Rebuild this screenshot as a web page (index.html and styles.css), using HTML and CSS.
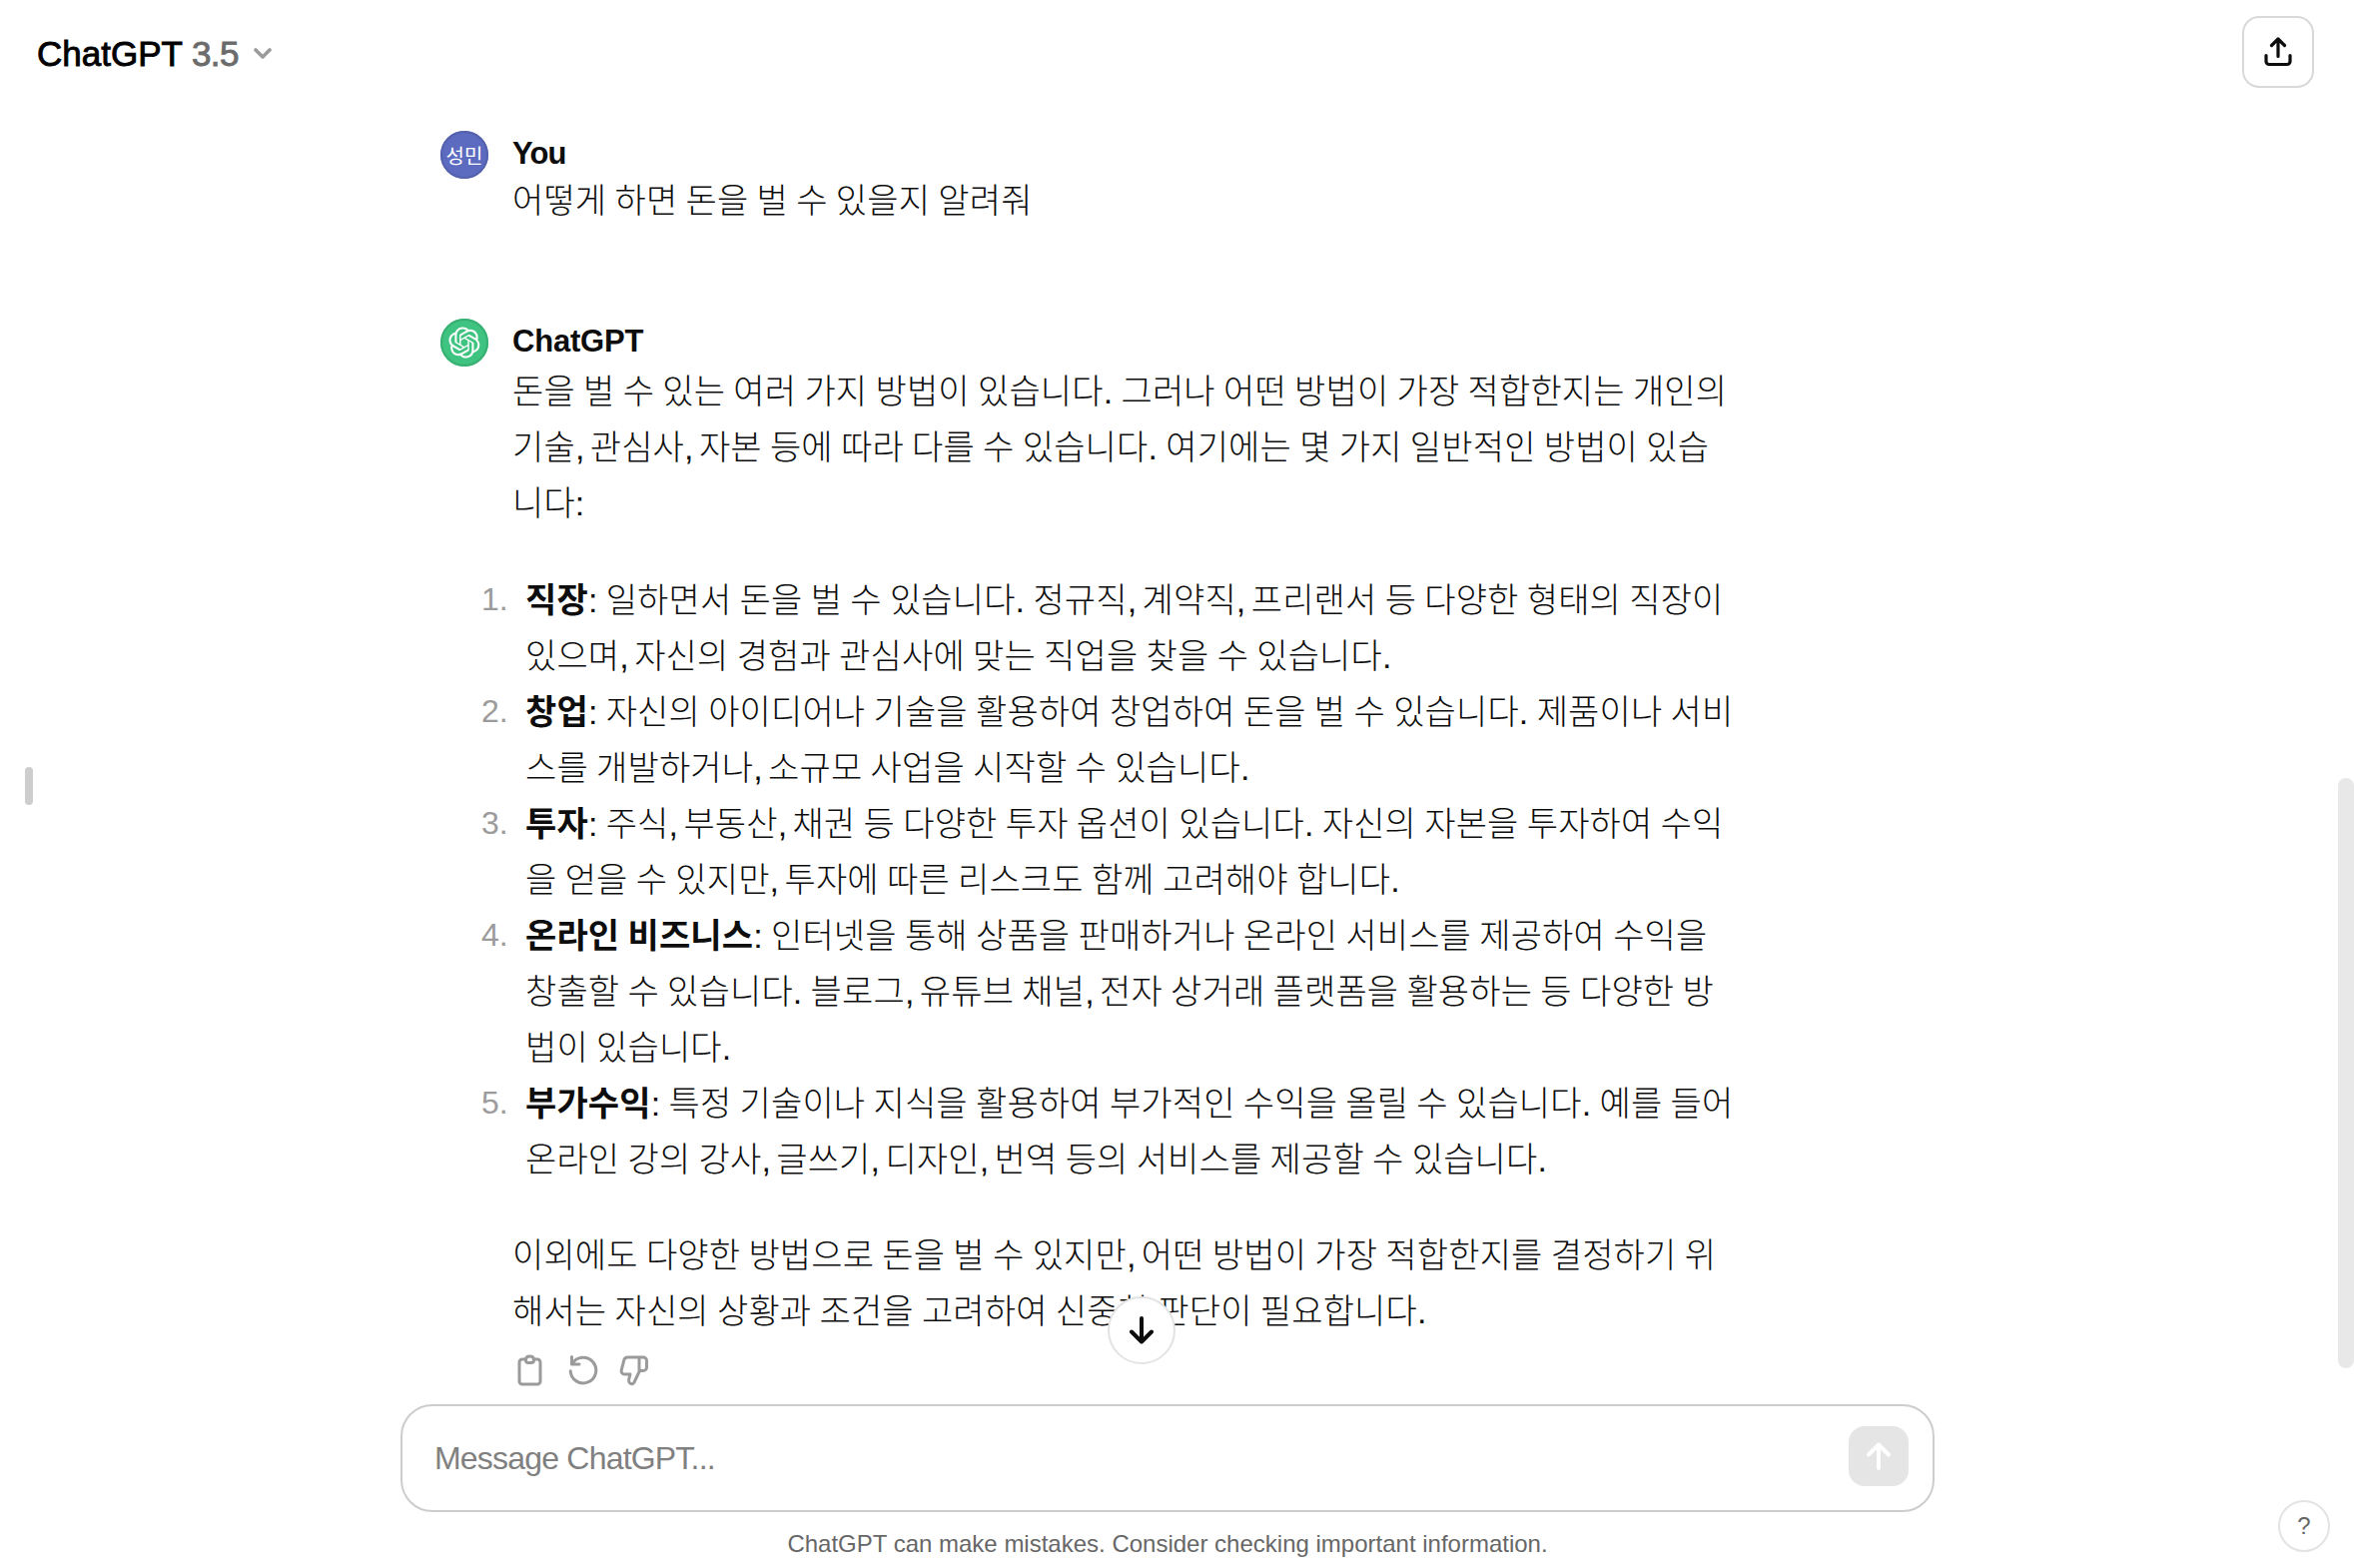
FILE: index.html
```html
<!DOCTYPE html>
<html lang="ko">
<head>
<meta charset="utf-8">
<title>ChatGPT</title>
<link rel="stylesheet" href="styles.css">
</head>
<body>
<div class="app">
  <aside class="rail"><span class="rail-handle"></span></aside>
  <header class="topbar">
    <div class="model">
      <span class="model-name">ChatGPT</span><span class="model-version">3.5</span>
      <svg class="chevron" viewBox="0 0 18 11"><path d="M2 2l7 7 7-7"/></svg>
    </div>
    <button class="share" aria-label="Share">
      <svg class="share-icon" viewBox="0 0 28 30"><path d="M14 19.500V2.500M7.500 8.500L14 2l6.500 6.500M2 18.500v6a3 3 0 0 0 3 3h18a3 3 0 0 0 3-3v-6"/></svg>
    </button>
  </header>

  <main class="thread">
    <article class="turn turn-user">
      <div class="avatar avatar-user">성민</div>
      <div class="body">
        <h2 class="author author-you">You</h2>
        <p class="prompt">어떻게 하면 돈을 벌 수 있을지 알려줘</p>
      </div>
    </article>

    <article class="turn turn-bot">
      <div class="avatar avatar-bot">
        <svg class="logo" viewBox="0 0 41 41"><path d="M37.5324 16.8707C37.9808 15.5241 38.1363 14.0974 37.9886 12.6859C37.8409 11.2744 37.3934 9.91076 36.676 8.68622C35.6126 6.83404 33.9882 5.3676 32.0373 4.4985C30.0864 3.62941 27.9098 3.40259 25.8215 3.85078C24.8796 2.7893 23.7219 1.94125 22.4257 1.36341C21.1295 0.785575 19.7249 0.491269 18.3058 0.500197C16.1708 0.495044 14.0893 1.16803 12.3614 2.42214C10.6335 3.67624 9.34853 5.44666 8.6917 7.47815C7.30085 7.76286 5.98686 8.3414 4.8377 9.17505C3.68854 10.0087 2.73073 11.0782 2.02839 12.312C0.956464 14.1591 0.498905 16.2988 0.721698 18.4228C0.944492 20.5467 1.83612 22.5449 3.268 24.1293C2.81966 25.4759 2.66413 26.9026 2.81182 28.3141C2.95951 29.7256 3.40701 31.0892 4.12437 32.3138C5.18791 34.1659 6.8123 35.6322 8.76321 36.5013C10.7141 37.3704 12.8907 37.5973 14.9789 37.1492C15.9208 38.2107 17.0786 39.0587 18.3747 39.6366C19.6709 40.2144 21.0755 40.5087 22.4946 40.4998C24.6307 40.5054 26.7133 39.8321 28.4418 38.5772C30.1704 37.3223 31.4556 35.5506 32.1119 33.5179C33.5027 33.2332 34.8167 32.6547 35.9659 31.821C37.115 30.9874 38.0728 29.9178 38.7752 28.684C39.8458 26.8371 40.3023 24.6979 40.0789 22.5748C39.8556 20.4517 38.9639 18.4544 37.5324 16.8707ZM22.4978 37.8849C20.7443 37.8874 19.0459 37.2733 17.6994 36.1501C17.7601 36.117 17.8666 36.0586 17.936 36.0161L25.9004 31.4156C26.1003 31.3019 26.2663 31.137 26.3813 30.9378C26.4964 30.7386 26.5563 30.5124 26.5549 30.2825V19.0542L29.9213 20.998C29.9389 21.0068 29.9541 21.0198 29.9656 21.0359C29.977 21.052 29.9842 21.0707 29.9867 21.0902V30.3889C29.9842 32.375 29.1946 34.2791 27.7909 35.6841C26.3872 37.0892 24.4838 37.8806 22.4978 37.8849ZM6.39227 31.0064C5.51397 29.4888 5.19742 27.7107 5.49804 25.9832C5.55718 26.0187 5.66048 26.0818 5.73461 26.1244L13.699 30.7248C13.8975 30.8408 14.1233 30.902 14.3532 30.902C14.583 30.902 14.8088 30.8408 15.0073 30.7248L24.731 25.1103V28.9979C24.7321 29.0177 24.7283 29.0376 24.7199 29.0556C24.7115 29.0736 24.6988 29.0893 24.6829 29.1012L16.6317 33.7497C14.9096 34.7416 12.8643 35.0097 10.9447 34.4954C9.02506 33.9811 7.38785 32.7263 6.39227 31.0064ZM4.29707 13.6194C5.17156 12.0998 6.55279 10.9364 8.19885 10.3327C8.19885 10.4013 8.19491 10.5228 8.19491 10.6071V19.808C8.19351 20.0378 8.25334 20.2638 8.36823 20.4629C8.48312 20.6619 8.64893 20.8267 8.84863 20.9404L18.5723 26.5542L15.206 28.4979C15.1894 28.5089 15.1703 28.5155 15.1505 28.5173C15.1307 28.5191 15.1107 28.516 15.0924 28.5082L7.04046 23.8557C5.32135 22.8601 4.06716 21.2235 3.55289 19.3046C3.03862 17.3858 3.30624 15.3413 4.29707 13.6194ZM31.955 20.0556L22.2312 14.4411L25.5976 12.4981C25.6142 12.4872 25.6333 12.4805 25.6531 12.4787C25.6729 12.4769 25.6928 12.4801 25.7111 12.4879L33.7631 17.1364C34.9967 17.849 36.0017 18.8982 36.6606 20.1613C37.3194 21.4244 37.6047 22.849 37.4832 24.2684C37.3617 25.6878 36.8382 27.0432 35.9743 28.1759C35.1103 29.3086 33.9415 30.1717 32.6047 30.6641C32.6047 30.5947 32.6047 30.4733 32.6047 30.3889V21.188C32.6066 20.9586 32.5474 20.7328 32.4332 20.5338C32.319 20.3348 32.154 20.1698 31.955 20.0556ZM35.3055 15.0128C35.2464 14.9765 35.1431 14.9142 35.069 14.8717L27.1045 10.2712C26.906 10.1554 26.6803 10.0943 26.4504 10.0943C26.2206 10.0943 25.9948 10.1554 25.7963 10.2712L16.0726 15.8858V11.9982C16.0715 11.9783 16.0753 11.9585 16.0837 11.9405C16.0921 11.9225 16.1048 11.9068 16.1207 11.8949L24.1719 7.25025C25.4053 6.53903 26.8158 6.19376 28.2383 6.25482C29.6608 6.31589 31.0364 6.78077 32.2044 7.59508C33.3723 8.40939 34.2842 9.53945 34.8334 10.8531C35.3826 12.1667 35.5464 13.6095 35.3055 15.0128ZM14.2424 21.9419L10.8752 19.9981C10.8576 19.9893 10.8423 19.9763 10.8309 19.9602C10.8195 19.9441 10.8122 19.9254 10.8098 19.9058V10.6071C10.8107 9.18295 11.2173 7.78848 11.9819 6.58696C12.7466 5.38544 13.8377 4.42659 15.1275 3.82264C16.4173 3.21869 17.8524 2.99464 19.2649 3.1767C20.6775 3.35876 22.0089 3.93941 23.1034 4.85067C23.0427 4.88379 22.937 4.94215 22.8668 4.98473L14.9024 9.58517C14.7025 9.69878 14.5366 9.86356 14.4215 10.0626C14.3065 10.2616 14.2466 10.4877 14.2479 10.7175L14.2424 21.9419ZM16.071 17.9991L20.4018 15.4978L24.7325 17.9975V22.9985L20.4018 25.4983L16.071 22.9985V17.9991Z"/></svg>
      </div>
      <div class="body">
        <h2 class="author author-bot">ChatGPT</h2>
        <p class="para">돈을 벌 수 있는 여러 가지 방법이 있습니다. 그러나 어떤 방법이 가장 적합한지는 개인의<br>기술<i>,</i> 관심사<i>,</i> 자본 등에 따라 다를 수 있습니다. 여기에는 몇 가지 일반적인 방법이 있습<br>니다:</p>
        <ol class="ideas">
          <li class="idea"><span class="num">1.</span><p class="para"><b>직장</b>: 일하면서 돈을 벌 수 있습니다. 정규직<i>,</i> 계약직<i>,</i> 프리랜서 등 다양한 형태의 직장이<br>있으며<i>,</i> 자신의 경험과 관심사에 맞는 직업을 찾을 수 있습니다.</p></li>
          <li class="idea"><span class="num">2.</span><p class="para"><b>창업</b>: 자신의 아이디어나 기술을 활용하여 창업하여 돈을 벌 수 있습니다. 제품이나 서비<br>스를 개발하거나<i>,</i> 소규모 사업을 시작할 수 있습니다.</p></li>
          <li class="idea"><span class="num">3.</span><p class="para"><b>투자</b>: 주식<i>,</i> 부동산<i>,</i> 채권 등 다양한 투자 옵션이 있습니다. 자신의 자본을 투자하여 수익<br>을 얻을 수 있지만<i>,</i> 투자에 따른 리스크도 함께 고려해야 합니다.</p></li>
          <li class="idea"><span class="num">4.</span><p class="para"><b>온라인 비즈니스</b>: 인터넷을 통해 상품을 판매하거나 온라인 서비스를 제공하여 수익을<br>창출할 수 있습니다. 블로그<i>,</i> 유튜브 채널<i>,</i> 전자 상거래 플랫폼을 활용하는 등 다양한 방<br>법이 있습니다.</p></li>
          <li class="idea"><span class="num">5.</span><p class="para"><b>부가수익</b>: 특정 기술이나 지식을 활용하여 부가적인 수익을 올릴 수 있습니다. 예를 들어<br>온라인 강의 강사<i>,</i> 글쓰기<i>,</i> 디자인<i>,</i> 번역 등의 서비스를 제공할 수 있습니다.</p></li>
        </ol>
        <p class="para">이외에도 다양한 방법으로 돈을 벌 수 있지만<i>,</i> 어떤 방법이 가장 적합한지를 결정하기 위<br>해서는 자신의 상황과 조건을 고려하여 신중한 판단이 필요합니다.</p>
        <div class="actions">
          <svg class="action" viewBox="0 0 32 32"><path d="M10.500 5H7a3 3 0 0 0-3 3v19a3 3 0 0 0 3 3h15a3 3 0 0 0 3-3V8a3 3 0 0 0-3-3h-3.500M10.500 5.500C10.500 3.500 12 2 14.500 2s4 1.500 4 3.500v.5a2.500 2.500 0 0 1-2.500 2.500h-3a2.500 2.500 0 0 1-2.500-2.500z"/></svg>
          <svg class="action" viewBox="0 0 32 32"><path d="M4.500 2.500V10h7.500M5 9.500A12.800 12.800 0 1 1 3.200 16.800"/></svg>
          <svg class="action" viewBox="0 0 32 32"><path d="M20 3v13.500M8.500 3H24a3.500 3.500 0 0 1 3.500 3.500V13a3.500 3.500 0 0 1-3.500 3.500h-3.500L14.800 28.500a2 2 0 0 1-1.800 1.200 3.500 3.500 0 0 1-3.300-4.500L11 20H5.500A3.200 3.200 0 0 1 2.200 16L4.800 5.800A3.800 3.800 0 0 1 8.500 3z"/></svg>
        </div>
      </div>
    </article>
  </main>

  <button class="to-bottom" aria-label="Scroll down"><svg class="down-icon" viewBox="0 0 24 28"><path d="M12 2v23M2 15.500L12 25.500l10-10"/></svg></button>

  <section class="composer">
    <span class="placeholder">Message ChatGPT...</span>
    <button class="send" aria-label="Send"><svg class="send-icon" viewBox="0 0 24 28"><path d="M12 26V2.500M2 12.500l10-10 10 10"/></svg></button>
  </section>
  <footer class="note"><span class="note-text">ChatGPT can make mistakes. Consider checking important information.</span></footer>

  <div class="scrollbar"></div>
  <button class="help">?</button>
</div>
</body>
</html>
```
FILE: styles.css
```css
* { box-sizing: border-box; }
body, h2, p, ol { margin: 0; padding: 0; }
body { background: #fff; color: #0d0d0d; font-family: "Liberation Sans", "Noto Sans CJK KR", sans-serif; }
button { padding: 0; background: #fff; font: inherit; }
svg { display: block; flex: none; fill: none; stroke: currentColor; stroke-linecap: round; stroke-linejoin: round; }

.app { position: relative; display: flex; flex-direction: column; width: 2357px; height: 1570px; overflow: hidden; }

.topbar { display: flex; align-items: flex-start; justify-content: space-between; height: 131px; padding: 16px 40px 0 37px; }
.model { display: flex; align-items: center; height: 74px; font-size: 35px; color: #000; white-space: nowrap; -webkit-text-stroke: 0.9px currentColor; }
.model-name { width: 147px; padding-top: 1px; letter-spacing: 0; }
.model-version { width: 61px; margin-left: 8px; padding-top: 1px; color: #6b6b6b; letter-spacing: -0.6px; }
.chevron { width: 18px; height: 11px; margin-left: 1px; color: #9b9b9b; stroke-width: 3.6; }
.share { display: flex; align-items: center; justify-content: center; width: 72px; height: 72px; border: 2px solid #d9d9d9; border-radius: 17px; color: #0d0d0d; }
.share-icon { width: 28px; height: 30px; stroke-width: 3.2; }

.thread { display: flex; flex-direction: column; height: 1275px; padding-left: 441px; }
.turn { display: flex; gap: 24px; }
.turn-user { height: 188px; }
.avatar { display: flex; flex: none; align-items: center; justify-content: center; width: 48px; height: 48px; border-radius: 50%; color: #fff; }
.avatar-user { background: #5c6bc0; box-shadow: inset 0 0 0 2px #5461ad; font: 20px "Noto Sans CJK KR", sans-serif; }
.avatar-bot { background: #3fc380; box-shadow: inset 0 0 0 2px #39b073; }
.logo { width: 32px; height: 32px; fill: #fff; stroke: none; }
.body { padding-top: 2px; }
.author { height: 40px; font-size: 31px; font-weight: 700; line-height: 41px; }
.author-you { letter-spacing: -0.9px; }
.author-bot { letter-spacing: -0.2px; }
.prompt, .para { padding-top: 3px; margin-bottom: -3px; font: 300 34px/56px "Liberation Sans", "Noto Sans CJK KR", sans-serif; white-space: nowrap; letter-spacing: 0.15px; word-spacing: -1.4px; }
.prompt { padding-top: 0; }
.turn-bot .author { margin-bottom: 0; }
.para b { font-weight: 700; }
.para i { font-style: normal; letter-spacing: -2.8px; }
.ideas { margin: 41px 0 40px -31px; list-style: none; }
.idea { display: flex; }
.num { width: 44px; font-size: 32px; line-height: 60px; color: #9b9b9b; }
.actions { display: flex; gap: 20px; padding-top: 18px; padding-left: 3px; color: #9b9b9b; }
.action { width: 32px; height: 32px; stroke-width: 3; }

.to-bottom { position: absolute; left: 1109px; top: 1298px; display: flex; align-items: center; justify-content: center; width: 68px; height: 68px; border: 2px solid #e3e3e3; border-radius: 50%; color: #0d0d0d; }
.down-icon { width: 24px; height: 28px; stroke-width: 4; }

.composer { display: flex; align-items: center; justify-content: space-between; width: 1536px; height: 108px; margin-left: 401px; padding: 0 24px 4px 32px; border: 2px solid #cdcdcd; border-radius: 32px; background: #fff; }
.placeholder { padding-top: 5px; color: #808080; font-size: 32px; letter-spacing: -0.8px; white-space: nowrap; }
.send { display: flex; align-items: center; justify-content: center; width: 60px; height: 60px; border: 0; border-radius: 16px; background: #e5e5e5; color: #fff; }
.send-icon { width: 24px; height: 28px; stroke-width: 4; }
.note { display: flex; justify-content: center; width: 1536px; margin: 16px 0 0 401px; }
.note-text { color: #676767; font-size: 24px; line-height: 32px; white-space: nowrap; }

.rail { position: absolute; left: 25px; top: 768px; }
.rail-handle { display: block; width: 8px; height: 38px; border-radius: 4px; background: #cdcdcd; }
.scrollbar { position: absolute; right: 0; top: 779px; width: 16px; height: 591px; border-radius: 8px; background: #e8e8e8; }
.help { position: absolute; left: 2281px; top: 1502px; width: 52px; height: 52px; border: 2px solid #e3e3e3; border-radius: 50%; color: #676767; font-size: 24px; }
```
